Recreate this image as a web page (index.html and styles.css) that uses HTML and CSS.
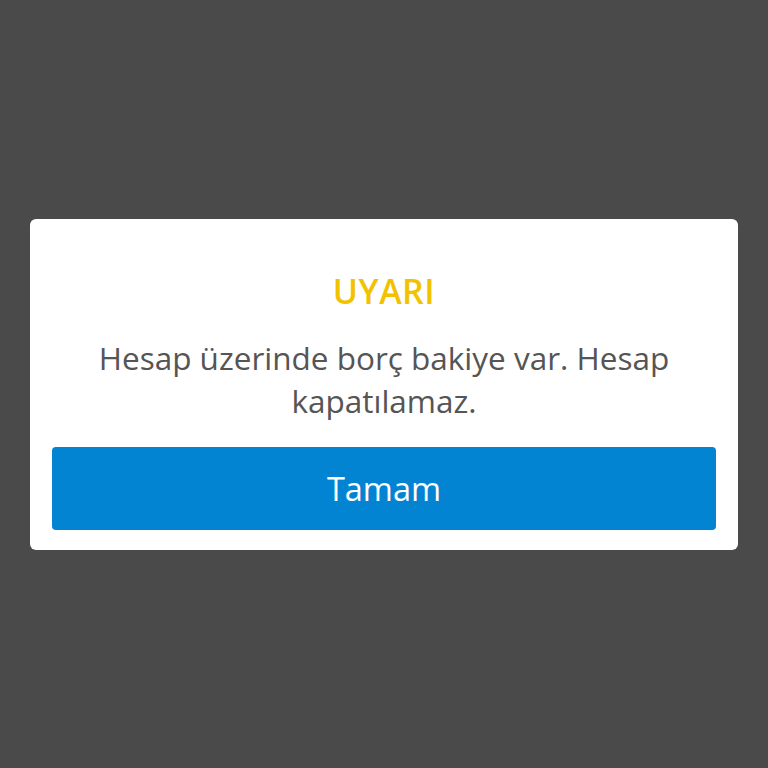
FILE: index.html
```html
<!DOCTYPE html>
<html lang="tr">
<head>
  <meta charset="UTF-8" />
  <meta name="viewport" content="width=device-width, initial-scale=1.0"/>
  <title>Uyarı</title>
  <link rel="stylesheet" href="styles.css">
</head>
<body>
  <div class="overlay">
    <div class="dialog">
      <h1>UYARI</h1>
      <p>Hesap üzerinde borç bakiye var. Hesap kapatılamaz.</p>
      <button>Tamam</button>
    </div>
  </div>
</body>
</html>
```

FILE: styles.css
```css
* {
  box-sizing: border-box;
}

body {
  font-family: 'Open Sans', 'Noto Sans', sans-serif;
  background: #4a4a4a;
  margin: 0;
  padding: 0;
}

.overlay {
  display: flex;
  justify-content: center;
  align-items: center;
  min-height: 100vh;
  padding: 0 30px;
}

.dialog {
  width: 100%;
  background: #fff;
  border-radius: 6px;
  padding: 52px 22px 20px;
  text-align: center;
}

h1 {
  color: #f2c200;
  font-size: 34px;
  font-weight: 600;
  letter-spacing: 0.5px;
  line-height: 40px;
  margin: 0 0 25px;
}

p {
  color: #555;
  font-size: 31.5px;
  line-height: 43px;
  margin: 0 0 25px;
  padding: 0 30px;
}

button {
  display: block;
  width: 100%;
  height: 83px;
  background: #0384d3;
  color: #fff;
  border: none;
  border-radius: 4px;
  font-family: inherit;
  font-size: 32.5px;
}
```
